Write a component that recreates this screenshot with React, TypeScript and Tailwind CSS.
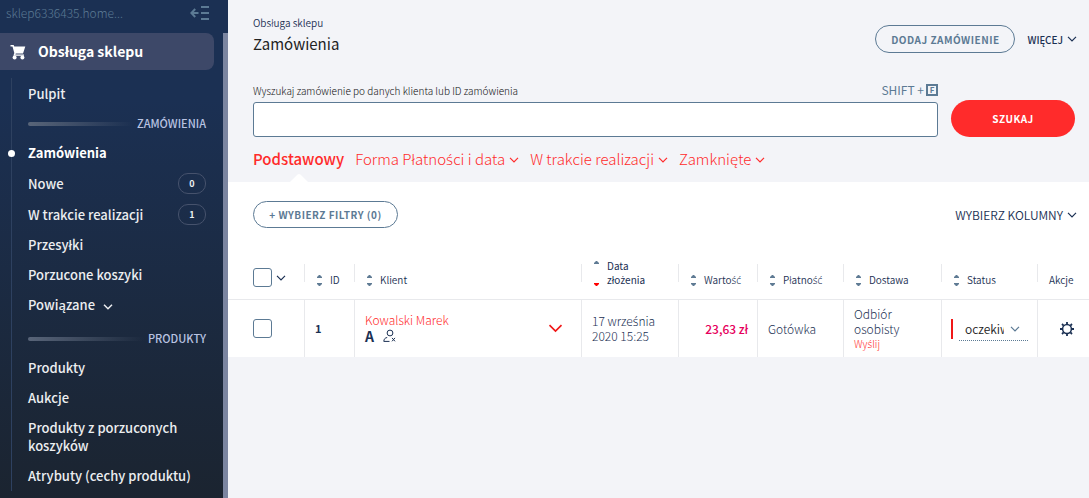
import React, { useState } from 'react';
import { clsx } from 'clsx';

/* ── Text ──────────────────────────────────────────────────────── */

// The main face has no ś, ć or ż of its own, so those letters come from Noto Sans
const Pl: React.FC<{ text: string }> = ({ text }) => (
  <>
    {text.split(/([śćż])/).map((part, i) =>
      i % 2 ? (
        <span key={i} className="font-['Noto_Sans',sans-serif]">{part}</span>
      ) : (
        part
      ),
    )}
  </>
);

/* ── Icons ─────────────────────────────────────────────────────── */

const Chevron: React.FC<{ className?: string; strokeWidth?: number }> = ({
  className = 'w-[10px] h-[6px]',
  strokeWidth = 1.2,
}) => (
  <svg viewBox="0 0 10 6" fill="none" stroke="currentColor" strokeWidth={strokeWidth} className={clsx('shrink-0', className)}>
    <path d="M1 0.8L5 4.8L9 0.8" />
  </svg>
);

const CartIcon = () => (
  <svg width="16" height="16" viewBox="0 0 16 16" fill="currentColor" className="shrink-0">
    <path d="M0.5 0.9H3.6L4.3 2.4H15.3L13 9.6H5.8L5.4 10.4H14V11.8H3.4L4.3 8.9L2.5 2.6H0.5Z" />
    <circle cx="4.6" cy="13.5" r="2" />
    <circle cx="12.4" cy="13.5" r="2" />
  </svg>
);

const CollapseIcon = () => (
  <svg width="20" height="16" viewBox="0 0 20 16" fill="none" stroke="currentColor" strokeWidth="2">
    <path d="M8.5 8H1.5M5.2 4L1.4 8L5.2 12" />
    <path d="M11 2H19M11 8H19M11 14H19" />
  </svg>
);

const UserRemoveIcon = () => (
  <svg width="14" height="14" viewBox="0 0 14 14" fill="none" stroke="currentColor" strokeWidth="1">
    <circle cx="8" cy="4" r="2.9" />
    <path d="M5.2 8.5C3 8.8 2 10 1.8 12.4H7.5" />
    <path d="M10 8.9L13 12.3M13 8.9L10 12.3" />
  </svg>
);

const GearIcon = () => (
  <svg width="14" height="14" viewBox="0 0 14 14" fill="none" stroke="currentColor">
    <circle cx="7" cy="7" r="4.4" strokeWidth="1.5" />
    <path
      strokeWidth="1.8"
      d="M7 0V2.2M7 11.8V14M0 7H2.2M11.8 7H14M2 2L3.6 3.6M10.4 10.4L12 12M2 12L3.6 10.4M10.4 3.6L12 2"
    />
  </svg>
);

const SortIcon: React.FC<{ tall?: boolean }> = ({ tall }) => (
  <span className={clsx('flex flex-col justify-between shrink-0 mb-px', tall ? 'h-[25px]' : 'h-[11px]')}>
    <svg width="5" height="3" viewBox="0 0 5 3" fill="#5f7b94">
      <path d="M0 3V2L2 0H3L5 2V3Z" />
    </svg>
    <svg width="5" height="3" viewBox="0 0 5 3" fill={tall ? '#f00' : '#5f7b94'}>
      <path d="M0 0H5V1L3 3H2L0 1Z" />
    </svg>
  </span>
);

/* ── Sidebar ───────────────────────────────────────────────────── */

interface NavItemProps {
  label: string;
  count?: number;
  active?: boolean;
  expandable?: boolean;
}

const NavItem: React.FC<NavItemProps> = ({ label, count, active, expandable }) => (
  <li>
    <a
      href="#"
      className={clsx(
        'relative flex items-center pl-4 pr-2 text-[13px] leading-[18px]',
        active ? 'font-bold text-white' : 'font-medium text-[#eceef0]',
        count !== undefined ? 'py-[5px]' : 'py-1.5',
      )}
    >
      {active && <span className="absolute -left-1 w-[7px] h-[7px] rounded-full bg-white" />}
      {label}
      {expandable && <Chevron className="w-[10px] h-[6px] ml-2 mt-1" strokeWidth={1.5} />}
      {count !== undefined && (
        <span className="ml-auto w-7 h-[21px] rounded-[10px] border border-[#46526c] flex items-center justify-center text-[9px] font-bold">
          {count}
        </span>
      )}
    </a>
  </li>
);

const NavHeading: React.FC<{ children: React.ReactNode }> = ({ children }) => (
  <li className="flex items-center gap-1 h-[29px] pl-4 pr-2 text-[11px] font-medium text-[#b9c3e2]">
    <span className="flex-1 h-1 rounded-l-sm bg-linear-to-r from-[#596579] to-transparent" />
    {children}
  </li>
);

const Sidebar = () => (
  <aside className="w-[228px] shrink-0 flex flex-col bg-linear-to-b from-[#1b3053] from-20% to-[#1b2430]">
    <div className="h-[33px] flex items-start justify-between pl-1.5 pr-[18px] pt-[5px] text-[#5c7a94]">
      <span className="text-[12px] leading-4 font-light">sklep6336435.home...</span>
      <button type="button" aria-label="Zwiń menu">
        <CollapseIcon />
      </button>
    </div>
    <div className="flex flex-1">
      <nav className="flex-1">
        <a href="#" className="flex items-center gap-3 h-[37px] mr-[9px] pl-2.5 rounded-r-lg bg-[#3d4868] text-white text-[14px] font-bold">
          <CartIcon />
          Obsługa sklepu
        </a>
        <ul className="ml-[11px] mt-2 mr-[9px] pt-px border-l border-[#2e4160]">
          <NavItem label="Pulpit" />
          <NavHeading>ZAMÓWIENIA</NavHeading>
          <NavItem label="Zamówienia" active />
          <NavItem label="Nowe" count={0} />
          <NavItem label="W trakcie realizacji" count={1} />
          <NavItem label="Przesyłki" />
          <NavItem label="Porzucone koszyki" />
          <NavItem label="Powiązane" expandable />
          <li className="h-1" />
          <NavHeading>PRODUKTY</NavHeading>
          <NavItem label="Produkty" />
          <NavItem label="Aukcje" />
          <NavItem label="Produkty z porzuconych koszyków" />
          <NavItem label="Atrybuty (cechy produktu)" />
        </ul>
      </nav>
      <div className="w-[5px] bg-[#7b85a0]" />
    </div>
  </aside>
);

/* ── Orders table ──────────────────────────────────────────────── */

const Checkbox: React.FC<{ label: string }> = ({ label }) => (
  <input
    type="checkbox"
    aria-label={label}
    className="appearance-none block w-[19px] h-[19px] shrink-0 rounded-[3px] border border-[#5c7a94] bg-white checked:bg-[#5c7a94]"
  />
);

interface HeaderCellProps {
  lines: string[];
  sortable?: boolean;
  sorted?: boolean;
}

const HeaderCell: React.FC<HeaderCellProps> = ({ lines, sortable = true, sorted }) => (
  <th className="p-0 pb-3 align-bottom border-b border-[#e8e9ec] font-[350] text-left">
    <div className="flex items-end">
      <span className="w-px h-[18px] mb-[5px] bg-[#e8e9ec]" />
      <span className={clsx('flex items-end leading-[14px]', sortable ? 'gap-2 pl-3' : 'pl-[11px]', sorted && 'font-normal')}>
        {sortable && <SortIcon tall={sorted} />}
        <span>
          {lines.map((line) => (
            <span key={line} className="block h-[14px]">
              <Pl text={line} />
            </span>
          ))}
        </span>
      </span>
    </div>
  </th>
);

const cell = 'p-0 pl-2.5 border-l border-[#e8e9ec]';

const OrdersTable = () => (
  <table className="w-full mt-[31px] table-fixed border-separate border-spacing-0 text-[10px] text-[#1b3053]">
    <colgroup>
      <col className="w-[76px]" />
      <col className="w-[50px]" />
      <col />
      <col className="w-[97px]" />
      <col className="w-[79px]" />
      <col className="w-[86px]" />
      <col className="w-[98px]" />
      <col className="w-[96px]" />
      <col className="w-[52px]" />
    </colgroup>
    <thead>
      <tr>
        <th className="p-0 pl-[25px] pb-3 align-bottom border-b border-[#e8e9ec]">
          <div className="flex items-center gap-1">
            <Checkbox label="Zaznacz wszystkie" />
            <Chevron />
          </div>
        </th>
        <HeaderCell lines={['ID']} />
        <HeaderCell lines={['Klient']} />
        <HeaderCell lines={['Data', 'złożenia']} sorted />
        <HeaderCell lines={['Wartość']} />
        <HeaderCell lines={['Płatność']} />
        <HeaderCell lines={['Dostawa']} />
        <HeaderCell lines={['Status']} />
        <HeaderCell lines={['Akcje']} sortable={false} />
      </tr>
    </thead>
    <tbody className="text-[12px] leading-[15px] font-light">
      <tr className="h-[57px]">
        <td className="p-0 pl-[25px]">
          <Checkbox label="Zaznacz zamówienie 1" />
        </td>
        <td className={clsx(cell, 'text-[11px] font-bold')}>1</td>
        <td className={cell}>
          <div className="flex items-center justify-between pr-[18px]">
            <div>
              <a href="#" className="text-[#ff2b2b]">Kowalski Marek</a>
              <div className="flex items-center gap-2">
                <span className="text-[14px] leading-[18px] font-bold">A</span>
                <UserRemoveIcon />
              </div>
            </div>
            <Chevron className="w-[15px] h-[9px] text-[#f01818]" strokeWidth={1.1} />
          </div>
        </td>
        <td className={cell}>
          <div className="pb-0.5">
            <div className="h-[15px]">
              <Pl text="17 września" />
            </div>
            <div className="h-[15px]">2020 15:25</div>
          </div>
        </td>
        <td className={clsx(cell, 'pr-[9px] text-right font-medium text-[#e6005c]')}>23,63 zł</td>
        <td className={cell}>Gotówka</td>
        <td className={cell}>
          <div>Odbiór</div>
          <div>osobisty</div>
          <a href="#" className="block h-[15px] text-[10px] text-[#ff2b2b]">
            <Pl text="Wyślij" />
          </a>
        </td>
        <td className="p-0 pl-[9px] border-l border-[#e8e9ec]">
          <div className="flex items-center gap-1.5">
            <span className="w-0.5 h-5 bg-[#f01818]" />
            <div className="relative">
              <select
                aria-label="Status"
                className="appearance-none block w-[69px] h-6 pl-1.5 pr-6 bg-transparent border-b border-dotted border-[#5c7a94] font-[350] text-[#222]"
              >
                <option>oczekiwanie</option>
              </select>
              <span className="absolute right-2 inset-y-0 flex items-center text-[#5c7a94] pointer-events-none">
                <Chevron />
              </span>
            </div>
          </div>
        </td>
        <td className="p-0 pl-[22px] border-l border-[#e8e9ec]">
          <button type="button" aria-label="Akcje" className="block">
            <GearIcon />
          </button>
        </td>
      </tr>
    </tbody>
  </table>
);

/* ── Page ──────────────────────────────────────────────────────── */

const tabs = ['Podstawowy', 'Forma Płatności i data', 'W trakcie realizacji', 'Zamknięte'];

const App: React.FC = () => {
  const [activeTab, setActiveTab] = useState(0);

  return (
    <div className="flex min-h-screen bg-[#f3f4f8] font-['Noto_Sans_CJK_SC','Noto_Sans',sans-serif] font-[350]">
      <Sidebar />

      <main className="flex-1 min-w-0">
        <header className="flex items-center justify-between pt-4 pl-[25px] pr-3">
          <div>
            <a href="#" className="block text-[10px] leading-[14px] text-[#1b3053]">Obsługa sklepu</a>
            <h1 className="mt-1 text-[15px] leading-5 font-normal text-[#222]">Zamówienia</h1>
          </div>
          <div className="flex items-center gap-3 mt-2">
            <button
              type="button"
              className="w-[140px] h-7 rounded-full border border-[#5c7a94] text-[10px] font-bold tracking-wider text-[#5c7a94]"
            >
              DODAJ ZAMÓWIENIE
            </button>
            <button type="button" className="flex items-center gap-1 text-[10px] font-medium text-[#1b3053]">
              WIĘCEJ
              <Chevron />
            </button>
          </div>
        </header>

        <form className="flex items-end gap-[13px] mt-[29px] pl-[25px] pr-3.5" onSubmit={(e) => e.preventDefault()}>
          <div className="flex-1">
            <div className="flex items-center justify-between h-[14px] mb-[5px]">
              <label htmlFor="search" className="text-[10px] font-light text-[#111]">
                Wyszukaj zamówienie po danych klienta lub ID zamówienia
              </label>
              <span className="flex items-center gap-0.5 text-[12px] font-normal text-[#5c7a94]">
                SHIFT +
                <kbd className="w-3 h-3 border-2 border-[#5c7a94] flex items-center justify-center font-['Noto_Sans_CJK_SC',sans-serif] text-[8px] font-bold">
                  F
                </kbd>
              </span>
            </div>
            <input
              id="search"
              type="text"
              className="block w-full h-[35px] px-3 rounded-[3px] border border-[#5c7a94] bg-white text-[13px]"
            />
          </div>
          <button type="submit" className="w-[124px] h-[37px] rounded-full bg-[#ff2b2b] text-white text-[10px] font-bold tracking-wider">
            SZUKAJ
          </button>
        </form>

        <div className="flex items-center gap-[11px] mt-[11px] h-[34px] pb-3 pl-[25px] text-[15px] leading-[22px] font-light text-[#ff2b2b]">
          {tabs.map((tab, i) => (
            <button
              key={tab}
              type="button"
              onClick={() => setActiveTab(i)}
              className={clsx('relative flex items-center gap-1 h-[22px]', i === activeTab && 'font-medium')}
            >
              <span>
                <Pl text={tab} />
              </span>
              {i > 0 && <Chevron className="w-[10px] h-[6px] mt-0.5" />}
              {i === activeTab && (
                <svg width="18" height="9" viewBox="0 0 18 9" fill="#fff" className="absolute left-1/2 -translate-x-1/2 top-full mt-[3px]">
                  <path d="M0 9L7.6 1.6Q9 0.4 10.4 1.6L18 9Z" />
                </svg>
              )}
            </button>
          ))}
        </div>

        <section className="bg-white pt-[19px]">
          <div className="flex items-center justify-between pl-[25px] pr-3">
            <button
              type="button"
              className="w-[145px] h-[27px] rounded-full border border-[#5c7a94] text-[10px] font-bold tracking-wider text-[#5c7a94]"
            >
              + WYBIERZ FILTRY (0)
            </button>
            <button type="button" className="flex items-center gap-1 text-[12px] text-[#1b3053]">
              WYBIERZ KOLUMNY
              <Chevron />
            </button>
          </div>
          <OrdersTable />
        </section>
      </main>
    </div>
  );
};

export default App;
